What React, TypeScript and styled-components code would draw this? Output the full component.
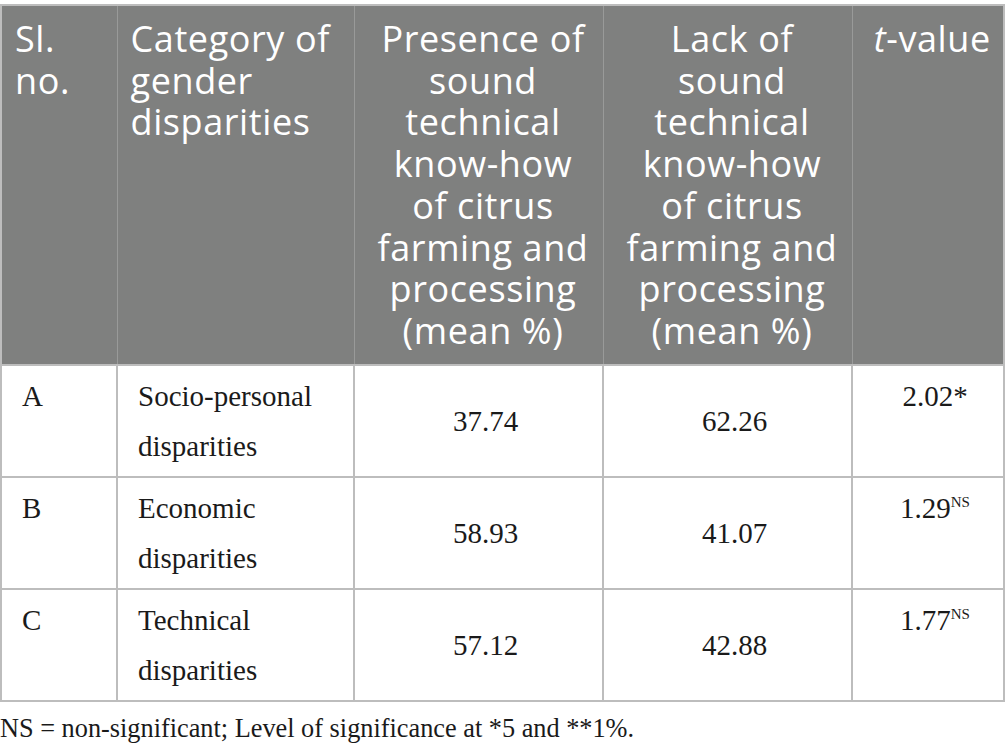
import React from 'react';
import styled, { createGlobalStyle } from 'styled-components';

interface Row {
	id: string;
	category: string[];
	presence: string;
	lack: string;
	tValue: string;
	mark: string;
	superscript: boolean;
}

const rows: Row[] = [
	{
		id: 'A',
		category: ['Socio-personal', 'disparities'],
		presence: '37.74',
		lack: '62.26',
		tValue: '2.02',
		mark: '*',
		superscript: false,
	},
	{
		id: 'B',
		category: ['Economic', 'disparities'],
		presence: '58.93',
		lack: '41.07',
		tValue: '1.29',
		mark: 'NS',
		superscript: true,
	},
	{
		id: 'C',
		category: ['Technical', 'disparities'],
		presence: '57.12',
		lack: '42.88',
		tValue: '1.77',
		mark: 'NS',
		superscript: true,
	},
];

const GlobalStyle = createGlobalStyle`
	body {
		margin: 0;
		background: #ffffff;
	}
`;

function App() {
	return (
		<Page>
			<GlobalStyle />
			<Table>
				<colgroup>
					<col style={{ width: 116 }} />
					<col style={{ width: 237 }} />
					<col style={{ width: 249 }} />
					<col style={{ width: 249 }} />
					<col />
				</colgroup>
				<thead>
					<tr>
						<HeadCell>
							Sl.
							<br />
							no.
						</HeadCell>
						<HeadCell>
							Category of
							<br />
							gender
							<br />
							disparities
						</HeadCell>
						<HeadCell $center>
							Presence of
							<br />
							sound
							<br />
							technical
							<br />
							know-how
							<br />
							of citrus
							<br />
							farming and
							<br />
							processing
							<br />
							(mean %)
						</HeadCell>
						<HeadCell $center>
							Lack of
							<br />
							sound
							<br />
							technical
							<br />
							know-how
							<br />
							of citrus
							<br />
							farming and
							<br />
							processing
							<br />
							(mean %)
						</HeadCell>
						<HeadCell $center>
							<em>t</em>-value
						</HeadCell>
					</tr>
				</thead>
				<tbody>
					{rows.map((row) => (
						<tr key={row.id}>
							<BodyCell>{row.id}</BodyCell>
							<BodyCell>
								{row.category[0]}
								<br />
								{row.category[1]}
							</BodyCell>
							<BodyCell $center $middle>
								{row.presence}
							</BodyCell>
							<BodyCell $center $middle>
								{row.lack}
							</BodyCell>
							<BodyCell $center>
								{row.tValue}
								{row.superscript ? <Sup>{row.mark}</Sup> : row.mark}
							</BodyCell>
						</tr>
					))}
				</tbody>
			</Table>
			<Footnote>
				NS = non-significant; Level of significance at *5 and **1%.
			</Footnote>
		</Page>
	);
}

const Page = styled.div`
	width: 1005px;
	padding-top: 4px;
`;

const Table = styled.table`
	width: 1005px;
	table-layout: fixed;
	border-collapse: collapse;
	border: 2px solid #bdbdbd;
`;

const HeadCell = styled.th<{ $center?: boolean }>`
	background: #7f807f;
	color: #ffffff;
	font-family: 'Open Sans', 'Noto Sans', sans-serif;
	font-weight: 400;
	font-size: 36px;
	letter-spacing: 0.6px;
	line-height: 41.7px;
	text-align: ${(p) => (p.$center ? 'center' : 'left')};
	vertical-align: top;
	padding: 12px 4px 12px 13px;
	border-left: 1px solid #999a99;
	border-right: 1px solid #999a99;

	em {
		font-style: italic;
	}
`;

const BodyCell = styled.td<{ $center?: boolean; $middle?: boolean }>`
	color: #1a1a1a;
	font-family: 'Liberation Serif', 'Times New Roman', serif;
	font-size: 29px;
	line-height: 50px;
	text-align: ${(p) => (p.$center ? 'center' : 'left')};
	vertical-align: ${(p) => (p.$middle ? 'middle' : 'top')};
	padding: 5px 6px 5px 20px;
	border: 2px solid #bdbdbd;
`;

const Sup = styled.sup`
	font-size: 15px;
	line-height: 0;
	vertical-align: 11px;
`;

const Footnote = styled.p`
	margin: 11px 0 0;
	color: #1a1a1a;
	font-family: 'Liberation Serif', 'Times New Roman', serif;
	font-size: 26.3px;
	line-height: 31px;
`;

export default App;
